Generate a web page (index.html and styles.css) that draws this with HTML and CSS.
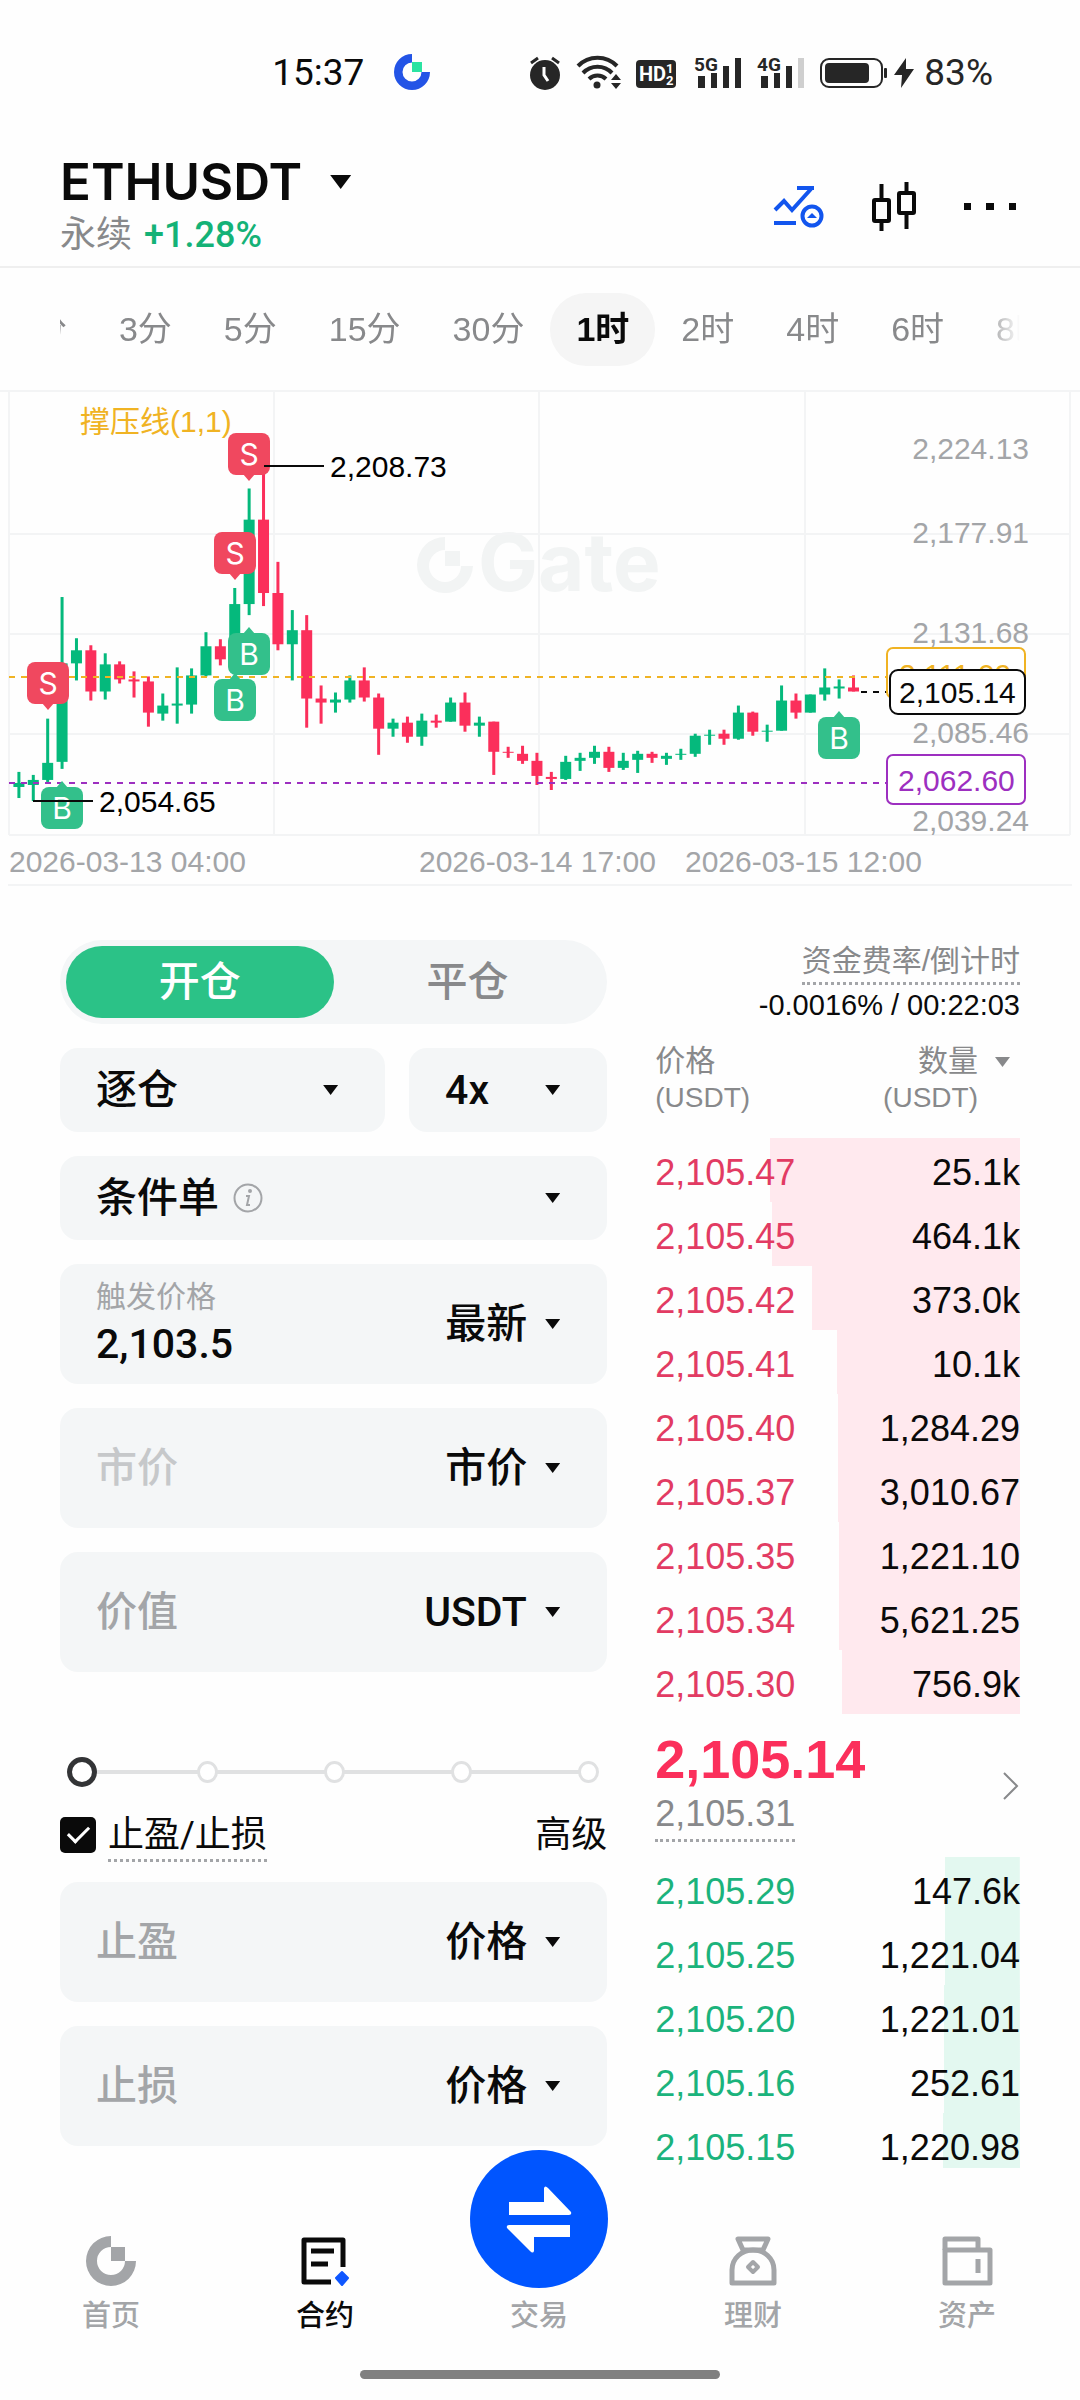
FILE: index.html
```
<!DOCTYPE html>
<html lang="zh-CN">
<head>
    <meta charset="UTF-8">
    <meta name="viewport" content="width=device-width, initial-scale=1">
    <title>ETHUSDT 永续</title>
    <link rel="stylesheet" href="styles.css">
</head>
<body>
    <div class="status-bar">
        <span class="clock">15:37</span>
        <svg class="app-logo" width="36" height="36" viewBox="0 0 36 36">
            <path d="M18 0A18 18 0 1 0 36 18H27.500A9.500 9.500 0 1 1 18 8.500Z" fill="#2354e6"/>
            <rect x="18" y="8" width="10" height="10" fill="#2be3a2"/>
        </svg>
        <svg class="status-icons" width="388" height="42" viewBox="0 0 388 42" fill="#262626">
            <!-- alarm -->
            <circle cx="17" cy="24" r="15"/>
            <path d="M3 12L10 7M31 12L24 7" stroke="#262626" stroke-width="3" fill="none"/>
            <path d="M16 16V24L20 30" stroke="#fff" stroke-width="3" fill="none"/>
            <!-- wifi -->
            <g fill="none" stroke="#262626" stroke-width="4">
                <path d="M50 15A27 27 0 0 1 89 15"/>
                <path d="M55 22A20 20 0 0 1 84 22"/>
                <path d="M61 28A12 12 0 0 1 78 28"/>
            </g>
            <circle cx="69" cy="34" r="3.500"/>
            <path d="M83 29L88 23L93 29ZM83 32H93L88 38Z"/>
            <!-- hd -->
            <rect x="108" y="9" width="40" height="28" rx="4"/>
            <text class="tiny" x="111" y="30" font-size="20" fill="#fff">HD</text>
            <text class="tiny" x="138" y="22" font-size="13" fill="#fff">1</text>
            <text class="tiny" x="138" y="34" font-size="13" fill="#fff">2</text>
            <!-- 5G -->
            <text class="tiny" x="166" y="20" font-size="19">5G</text>
            <path d="M170 25h7v12h-7zM183 22h6v15h-6zM195 15h6v22h-6zM207 7h6v30h-6z"/>
            <!-- 4G -->
            <text class="tiny" x="229" y="20" font-size="19">4G</text>
            <path d="M233 25h7v12h-7zM246 22h6v15h-6zM258 15h6v22h-6z"/>
            <path d="M270 7h6v30h-6z" fill="#cfcfcf"/>
            <!-- battery -->
            <rect x="293" y="8" width="61" height="28" rx="8" fill="none" stroke="#262626" stroke-width="2"/>
            <rect x="297" y="12" width="44" height="20" rx="4"/>
            <rect x="356" y="17" width="3" height="10" rx="1"/>
            <path d="M378 7L366 24H374L373 37L386 18H378Z"/>
        </svg>
        <span class="battery">83%</span>
    </div>

    <header class="header">
        <div>
            <button class="symbol">ETHUSDT <span class="caret"></span></button>
            <div class="change">永续 <b>+1.28%</b></div>
        </div>
        <div class="header-actions">
            <button aria-label="指标">
                <svg width="52" height="50" viewBox="0 0 52 50" fill="none" stroke="#1255ee" stroke-width="4">
                    <path d="M2 28L11 19L19 28L38 7M24 6H41"/>
                    <path d="M1 41H23"/>
                    <circle cx="39" cy="34" r="9.500"/>
                    <path d="M34 36L39 31L44 36Z" fill="#1255ee" stroke="none"/>
                </svg>
            </button>
            <button aria-label="K线">
                <svg width="46" height="50" viewBox="0 0 46 50" fill="none" stroke="#0a0a0a" stroke-width="4">
                    <rect x="3" y="18" width="15" height="21" rx="1"/>
                    <rect x="28" y="11" width="15" height="20" rx="1"/>
                    <path d="M10.500 2V18M10.500 39V49M35.500 0V11M35.500 31V47"/>
                </svg>
            </button>
            <button aria-label="更多">
                <svg width="54" height="50" viewBox="0 0 54 50" fill="#0a0a0a">
                    <path d="M1 21h7v7H1zM23 21h8v7h-8zM46 21h7v7h-7z"/>
                </svg>
            </button>
        </div>
    </header>

    <div class="periods">
        <div class="period-strip">
            <button>1分</button>
            <button>3分</button>
            <button>5分</button>
            <button>15分</button>
            <button>30分</button>
            <button class="active">1时</button>
            <button>2时</button>
            <button>4时</button>
            <button>6时</button>
            <button>8时</button>
        </div>
    </div>

    <svg class="chart" viewBox="0 0 1080 500">
        <g class="watermark">
            <path d="M445 147A28 28 0 1 0 473 176H461A16 16 0 1 1 445 160Z"/>
            <rect x="445" y="161" width="15" height="15"/>
            <text x="478" y="201">Gate</text>
        </g>
        <path class="grid" d="M0 1H1080M9 144H1070M9 244H1070M9 344H1070M9 445H1070M8 495H1072M9 1V445M274 1V445M539 1V445M805 1V445M1070 1V445"/>
        <g class="axis">
            <text x="1029" y="69">2,224.13</text>
            <text x="1029" y="153">2,177.91</text>
            <text x="1029" y="253">2,131.68</text>
            <text x="1029" y="353">2,085.46</text>
            <text x="1029" y="441">2,039.24</text>
        </g>
        <g class="dates">
            <text x="9" y="482">2026-03-13 04:00</text>
            <text x="419" y="482">2026-03-14 17:00</text>
            <text x="685" y="482">2026-03-15 12:00</text>
        </g>
        <text class="indicator" x="80" y="42">撑压线(1,1)</text>

        <g id="candles"></g>

        <path class="line-high" d="M9 287H887"/>
        <path class="line-low" d="M9 393H887"/>
        <path class="line-last" d="M861 302H890"/>

        <g id="markers"></g>

        <path class="callout" d="M264 76H324M33 411H93"/>
        <text x="330" y="87">2,208.73</text>
        <text x="99" y="422">2,054.65</text>

        <g class="tag tag-high">
            <rect x="887" y="258" width="138" height="50" rx="6"/>
            <text x="899" y="295">2,111.09</text>
        </g>
        <g class="tag tag-low">
            <rect x="887" y="365" width="138" height="49" rx="6"/>
            <text x="898" y="401">2,062.60</text>
        </g>
        <g class="tag tag-last">
            <rect x="890" y="280" width="135" height="44" rx="8"/>
            <text x="899" y="313">2,105.14</text>
        </g>
    </svg>

    <main class="trade">
        <form class="order">
            <div class="segmented">
                <button type="button" class="active">开仓</button>
                <button type="button">平仓</button>
            </div>

            <div class="pair">
                <label class="field">
                    <select aria-label="保证金模式"><option>逐仓</option></select>
                    <span class="caret"></span>
                </label>
                <label class="field">
                    <select aria-label="杠杆"><option>4x</option></select>
                    <span class="caret"></span>
                </label>
            </div>

            <label class="field">
                <select aria-label="委托类型"><option>条件单</option></select>
                <svg width="30" height="30" viewBox="0 0 30 30" fill="none" stroke="#a3a5a8" stroke-width="2">
                    <circle cx="15" cy="15" r="13.500"/>
                    <path d="M13 13H16L14 22H17"/>
                    <circle cx="17" cy="8" r="1" fill="#a3a5a8"/>
                </svg>
                <span class="caret"></span>
            </label>

            <div class="field tall">
                <label class="stacked">
                    <span>触发价格</span>
                    <input type="text" value="2,103.5">
                </label>
                <select aria-label="触发类型"><option>最新</option></select>
                <span class="caret"></span>
            </div>

            <div class="field tall">
                <input type="text" placeholder="市价" aria-label="价格" disabled>
                <select aria-label="价格类型"><option>市价</option></select>
                <span class="caret"></span>
            </div>

            <div class="field tall">
                <input type="text" placeholder="价值" aria-label="价值">
                <select aria-label="单位"><option>USDT</option></select>
                <span class="caret"></span>
            </div>

            <div class="slider">
                <div class="ticks"><i></i><i></i><i></i><i></i><i></i></div>
                <input type="range" min="0" max="100" value="0" aria-label="仓位比例">
            </div>

            <div class="tpsl">
                <input type="checkbox" id="tpsl" checked>
                <label for="tpsl">止盈/止损</label>
                <button type="button">高级</button>
            </div>

            <div class="field tall">
                <input type="text" placeholder="止盈" aria-label="止盈">
                <select aria-label="止盈类型"><option>价格</option></select>
                <span class="caret"></span>
            </div>

            <div class="field tall">
                <input type="text" placeholder="止损" aria-label="止损">
                <select aria-label="止损类型"><option>价格</option></select>
                <span class="caret"></span>
            </div>
        </form>

        <section class="book">
            <div class="funding">
                <span class="dotted">资金费率/倒计时</span>
                <div>-0.0016% / 00:22:03</div>
            </div>
            <table>
                <thead>
                    <tr>
                        <th>价格<br><small>(USDT)</small></th>
                        <th>
                            <div class="amount-head">
                                <button>数量<br><small>(USDT)</small></button>
                                <span class="caret"></span>
                            </div>
                        </th>
                    </tr>
                </thead>
                <tbody class="asks">
                    <tr style="--depth: 68.5%"><td>2,105.47</td><td>25.1k</td></tr>
                    <tr style="--depth: 68%"><td>2,105.45</td><td>464.1k</td></tr>
                    <tr style="--depth: 57%"><td>2,105.42</td><td>373.0k</td></tr>
                    <tr style="--depth: 50.2%"><td>2,105.41</td><td>10.1k</td></tr>
                    <tr style="--depth: 49.9%"><td>2,105.40</td><td>1,284.29</td></tr>
                    <tr style="--depth: 49.9%"><td>2,105.37</td><td>3,010.67</td></tr>
                    <tr style="--depth: 49.6%"><td>2,105.35</td><td>1,221.10</td></tr>
                    <tr style="--depth: 49.6%"><td>2,105.34</td><td>5,621.25</td></tr>
                    <tr style="--depth: 48.8%"><td>2,105.30</td><td>756.9k</td></tr>
                </tbody>
                <tbody class="last">
                    <tr>
                        <td colspan="2">
                            <div class="last-row">
                                <div>
                                    <strong>2,105.14</strong>
                                    <span class="dotted">2,105.31</span>
                                </div>
                                <svg width="18" height="30" viewBox="0 0 18 30" fill="none" stroke="#88898b" stroke-width="2">
                                    <path d="M2 2L15 15L2 28"/>
                                </svg>
                            </div>
                        </td>
                    </tr>
                </tbody>
                <tbody class="bids">
                    <tr style="--depth: 20.5%"><td>2,105.29</td><td>147.6k</td></tr>
                    <tr style="--depth: 20.5%"><td>2,105.25</td><td>1,221.04</td></tr>
                    <tr style="--depth: 20.8%"><td>2,105.20</td><td>1,221.01</td></tr>
                    <tr style="--depth: 20.8%"><td>2,105.16</td><td>252.61</td></tr>
                    <tr style="--depth: 21.1%"><td>2,105.15</td><td>1,220.98</td></tr>
                </tbody>
            </table>
        </section>
    </main>

    <nav class="tabbar">
        <a href="#home">
            <svg width="50" height="50" viewBox="0 0 50 50" fill="#a3a5a8">
                <path d="M25 0A25 25 0 1 0 50 25H39A14 14 0 1 1 25 11Z"/>
                <rect x="25" y="11" width="14" height="14"/>
            </svg>
            首页
        </a>
        <a href="#futures" class="active">
            <svg width="50" height="50" viewBox="0 0 50 50" fill="none" stroke="#0a0a0a" stroke-width="5">
                <path d="M31 46H4V4H43V31" stroke-linejoin="round"/>
                <path d="M11 15H34M11 28H28"/>
                <path d="M42 36L48 42L42 49L36 42Z" fill="#0f57ff" stroke="#0f57ff" stroke-width="2" stroke-linejoin="round"/>
            </svg>
            合约
        </a>
        <a href="#trade" class="swap">
            <svg width="138" height="138" viewBox="0 0 138 138">
                <circle cx="69" cy="69" r="69" fill="#0055ff"/>
                <path d="M39 52H74V38Q75 35 78 38L101 62Q102 65 99 65H39ZM100 75V87H64V101Q63 104 60 101L37 78Q36 75 39 75Z" fill="#fff"/>
            </svg>
            交易
        </a>
        <a href="#earn">
            <svg width="50" height="50" viewBox="0 0 50 50" fill="none" stroke="#a3a5a8" stroke-width="5" stroke-linejoin="round">
                <path d="M10 3H40L35 14H15Z"/>
                <path d="M4 47V34C4 22 14 14 25 14S46 22 46 34V47Z"/>
                <path d="M25 26L30 31L25 36L20 31Z" stroke-width="4"/>
            </svg>
            理财
        </a>
        <a href="#assets">
            <svg width="52" height="50" viewBox="0 0 52 50" fill="none" stroke="#a3a5a8" stroke-width="5" stroke-linejoin="round">
                <path d="M4 14V3H37V14"/>
                <rect x="4" y="14" width="45" height="33"/>
                <path d="M37 23V37"/>
            </svg>
            资产
        </a>
    </nav>
    <div class="home-indicator"></div>

    <script src="chart.js"></script>
</body>
</html>
```
FILE: styles.css
```
* {
    box-sizing: border-box;
}
body {
    margin: 0;
    background: #fefefe;
    color: #0a0a0a;
    font-family: "Liberation Sans", "Noto Sans CJK SC", sans-serif;
    font-size: 36px;
}
button, input, select {
    font: inherit;
    color: inherit;
    background: none;
    border: none;
    padding: 0;
    margin: 0;
}
select {
    appearance: none;
}
.caret {
    flex: none;
    width: 15px;
    height: 10px;
    background: currentColor;
    clip-path: polygon(0 0, 100% 0, 50% 100%);
}
.dotted {
    border-bottom: 3px dotted #a3a5a8;
}

/* status bar */
.status-bar {
    display: flex;
    align-items: center;
    justify-content: flex-end;
    height: 144px;
    padding-right: 87px;
    font-family: Roboto, sans-serif;
    font-size: 37px;
}
.app-logo {
    margin: 0 98px 0 30px;
}
.battery {
    margin-left: 8px;
    color: #262626;
}
.tiny {
    font-family: Roboto, sans-serif;
    font-weight: 700;
}

/* header */
.header {
    display: flex;
    justify-content: space-between;
    align-items: center;
    height: 124px;
    padding: 4px 63px 0 60px;
    border-bottom: 2px solid #efefef;
}
.symbol {
    display: flex;
    align-items: center;
    gap: 28px;
    font-family: Inter, sans-serif;
    font-size: 51px;
    font-weight: 600;
    line-height: 56px;
}
.symbol .caret {
    width: 21px;
    height: 14px;
}
.change {
    line-height: 50px;
    color: #88898b;
}
.change b {
    margin-left: 2px;
    font-family: Roboto, sans-serif;
    font-weight: 500;
    color: #14b277;
}
.header-actions {
    display: flex;
    gap: 46px;
}
.header-actions svg {
    display: block;
}

/* periods */
.periods {
    margin: 0 60px;
    padding: 25px 0 24px;
    overflow: hidden;
    mask-image: linear-gradient(to right, #000 96%, transparent);
}
.period-strip {
    display: flex;
    margin-left: -72px;
}
.period-strip button {
    flex: none;
    padding: 0 26px;
    border-radius: 36px;
    font-size: 34px;
    line-height: 73px;
    color: #88898b;
}
.period-strip .active {
    background: #f5f5f5;
    color: #0a0a0a;
    font-weight: 700;
}

/* chart */
.chart {
    display: block;
    width: 100%;
    font-size: 30px;
}
.watermark {
    fill: #f2f4f4;
    font-family: Inter, sans-serif;
    font-size: 80px;
    font-weight: 700;
}
.grid {
    stroke: #f3f4f5;
    stroke-width: 2;
}
.axis {
    fill: #a3a5a8;
    text-anchor: end;
}
.dates {
    fill: #a3a5a8;
}
.indicator {
    fill: #f0b323;
}
.up {
    fill: #05b97c;
}
.down {
    fill: #fb2f5b;
}
.line-high, .line-low, .line-last {
    stroke-width: 2;
    stroke-dasharray: 6 6;
}
.line-high {
    stroke: #f0b323;
}
.line-low {
    stroke: #9d2fc0;
}
.line-last, .callout {
    stroke: #0a0a0a;
    stroke-width: 2;
}
.marker {
    font-family: Inter, sans-serif;
    font-size: 30px;
    text-anchor: middle;
}
.marker text {
    fill: #fff;
}
.marker.sell {
    fill: #f0485f;
}
.marker.buy {
    fill: #33c08b;
}
.tag rect {
    fill: #fff;
    stroke: currentColor;
    stroke-width: 2;
}
.tag text {
    fill: currentColor;
}
.tag-high {
    color: #f0b323;
}
.tag-low {
    color: #9d2fc0;
}

/* trade area */
.trade {
    display: grid;
    grid-template-columns: 3fr 2fr;
    gap: 48px;
    padding: 50px 60px 0;
}
.order {
    display: flex;
    flex-direction: column;
    gap: 24px;
    min-width: 0;
    font-family: Roboto, "Noto Sans CJK SC", sans-serif;
    font-size: 41px;
    font-weight: 500;
}
.segmented {
    display: flex;
    padding: 6px;
    border-radius: 42px;
    background: #f4f6f7;
}
.segmented button {
    flex: 1;
    border-radius: 36px;
    line-height: 72px;
    color: #88898b;
}
.segmented .active {
    background: #2bc287;
    color: #fff;
}
.pair {
    display: grid;
    grid-template-columns: 325fr 198fr;
    gap: 24px;
}
.field {
    display: flex;
    align-items: center;
    height: 84px;
    padding: 0 47px 0 36px;
    border-radius: 18px;
    background: #f4f6f7;
}
.field.tall {
    height: 120px;
}
.field > svg {
    margin-left: 14px;
}
.field .caret {
    margin-left: auto;
}
.field.tall .caret {
    margin-left: 18px;
}
.field input {
    flex: 1;
    width: 100%;
    min-width: 0;
}
.field input::placeholder {
    color: #a3a5a8;
}
.field input:disabled::placeholder {
    color: #c6c8ca;
}
.stacked {
    flex: 1;
    min-width: 0;
}
.stacked span {
    display: block;
    font-size: 30px;
    font-weight: 400;
    line-height: 40px;
    color: #a3a5a8;
}
.stacked input {
    display: block;
    height: 54px;
}

/* amount slider */
.slider {
    position: relative;
    margin: 54px 0 -6px;
    padding: 0 7px;
}
.slider input {
    position: relative;
    display: block;
    width: 100%;
    height: 44px;
    appearance: none;
}
.slider input::-webkit-slider-thumb {
    appearance: none;
    width: 30px;
    height: 30px;
    border: 5px solid #333436;
    border-radius: 50%;
    background: #fff;
}
.ticks {
    position: absolute;
    inset: 11px 8px 11px 10px;
    display: flex;
    justify-content: space-between;
    background: linear-gradient(#e0e1e2, #e0e1e2) center / 96% 4px no-repeat;
}
.ticks i {
    width: 21px;
    height: 22px;
    border: 3px solid #e0e1e2;
    border-radius: 50%;
    background: #fff;
}

.tpsl {
    display: flex;
    align-items: center;
    height: 46px;
    font-size: 36px;
    font-weight: 400;
}
.tpsl input {
    appearance: none;
    width: 36px;
    height: 36px;
    margin-right: 12px;
    border-radius: 5px;
    background: #0a0a0a;
    display: grid;
    place-items: center;
}
.tpsl input:checked::before {
    content: "";
    width: 18px;
    height: 9px;
    margin-bottom: 6px;
    border-left: 3px solid #fff;
    border-bottom: 3px solid #fff;
    transform: rotate(-45deg);
}
.tpsl label {
    padding-top: 3px;
    line-height: 48px;
    border-bottom: 3px dotted #a3a5a8;
}
.tpsl button {
    margin-left: auto;
    line-height: 48px;
}

/* order book */
.funding {
    text-align: right;
    font-size: 30px;
    line-height: 42px;
    color: #88898b;
}
.funding .dotted {
    display: inline-block;
}
.funding div {
    font-size: 29px;
    line-height: 40px;
    color: #0a0a0a;
}
table {
    width: 100%;
    border-collapse: collapse;
    font-size: 36px;
}
th {
    height: 113px;
    padding: 18px 0 0;
    text-align: left;
    vertical-align: top;
    font-size: 30px;
    font-weight: 400;
    line-height: 36px;
    color: #88898b;
}
.amount-head {
    display: flex;
    justify-content: flex-end;
    gap: 17px;
    padding-right: 10px;
}
.amount-head button {
    text-align: right;
}
.amount-head .caret {
    margin-top: 14px;
}
small {
    font-size: 28px;
}
td {
    height: 64px;
    padding: 5px 0 0;
    line-height: 48px;
}
td + td {
    text-align: right;
}
.asks tr {
    background: linear-gradient(#ffe9ee, #ffe9ee) right / var(--depth) 100% no-repeat;
}
.bids tr {
    background: linear-gradient(#e3f8f0, #e3f8f0) right / var(--depth) 100% no-repeat;
}
.asks td:first-child {
    color: #e23b63;
}
.bids td:first-child {
    color: #1bb37c;
}
.last td {
    height: 143px;
    padding: 0;
}
.last-row {
    display: flex;
    justify-content: space-between;
    align-items: center;
    color: #88898b;
}
.last-row strong {
    display: block;
    font-size: 54px;
    line-height: 60px;
    color: #fb2f5b;
}
.last-row .dotted {
    display: inline-block;
    line-height: 50px;
}

/* bottom tabs */
.tabbar {
    position: relative;
    display: grid;
    grid-template-columns: repeat(5, 1fr);
    align-items: end;
    height: 168px;
    margin-top: -9px;
    padding: 0 6px 0 4px;
    background: #fefefe;
}
.tabbar a {
    display: flex;
    flex-direction: column;
    align-items: center;
    gap: 10px;
    font-size: 29px;
    font-weight: 500;
    line-height: 40px;
    color: #a3a5a8;
    text-decoration: none;
}
.tabbar .active {
    color: #0a0a0a;
}
.tabbar .swap {
    gap: 8px;
    margin-top: -18px;
}
.home-indicator {
    width: 360px;
    height: 9px;
    margin: 34px auto 0;
    border-radius: 5px;
    background: #808080;
}
```
FILE: chart.js
```
// [direction, high, body top, body bottom, low] in chart units
const candles = [
    ['up', 380, 391, 395, 406], ['up', 383, 388, 393, 409], ['up', 327, 371, 388, 390],
    ['up', 206, 272, 370, 377], ['up', 247, 259, 272, 289], ['down', 254, 259, 300, 309],
    ['up', 262, 273, 300, 308], ['down', 270, 273, 288, 292], ['down', 280, 288, 290, 306],
    ['down', 285, 290, 321, 335], ['up', 302, 314, 322, 329], ['up', 276, 312, 314, 332],
    ['up', 277, 284, 313, 322], ['up', 241, 255, 284, 285], ['down', 248, 255, 268, 274],
    ['up', 197, 213, 275, 275], ['up', 98, 129, 213, 224], ['down', 76, 129, 202, 215],
    ['down', 171, 202, 253, 259], ['up', 219, 239, 253, 289], ['down', 224, 239, 307, 336],
    ['down', 294, 307, 311, 332], ['up', 301, 308, 311, 321], ['up', 284, 289, 308, 311],
    ['down', 276, 289, 306, 310], ['down', 302, 306, 337, 363], ['up', 327, 331, 337, 345],
    ['down', 325, 331, 345, 351], ['up', 322, 329, 345, 354], ['down', 323, 329, 331, 336],
    ['up', 306, 311, 330, 330], ['down', 301, 311, 334, 340], ['up', 325, 331, 334, 345],
    ['down', 330, 330, 360, 383], ['down', 355, 360, 361, 366], ['down', 354, 362, 369, 372],
    ['down', 361, 369, 384, 393], ['down', 380, 385, 387, 398], ['up', 364, 370, 387, 388],
    ['up', 361, 366, 369, 379], ['up', 354, 360, 366, 372], ['down', 355, 360, 376, 380],
    ['up', 361, 369, 376, 378], ['up', 359, 362, 368, 381], ['down', 360, 362, 366, 371],
    ['up', 361, 364, 367, 373], ['up', 357, 362, 363, 368], ['up', 342, 344, 362, 365],
    ['up', 338, 343, 344, 353], ['down', 338, 342, 347, 353], ['up', 314, 321, 347, 348],
    ['down', 320, 321, 340, 344], ['up', 333, 339, 340, 350], ['up', 294, 309, 339, 339],
    ['down', 302, 309, 321, 327], ['up', 303, 303, 321, 321], ['up', 277, 296, 303, 309],
    ['up', 288, 295, 297, 307], ['down', 284, 296, 300, 300]
];

// [side, center x, box top]
const markers = [
    ['S', 249, 43], ['S', 235, 142], ['S', 48, 272],
    ['B', 235, 289], ['B', 249, 243], ['B', 62, 397], ['B', 839, 327]
];

const first = 18.9;
const step = 14.39;
const toY = (v) => v * 1.005;

document.getElementById('candles').innerHTML = candles.map(([dir, high, top, bottom, low], i) => {
    const x = first + i * step;
    return `<g class="${dir}">
        <rect x="${x - 1.5}" y="${toY(high)}" width="3" height="${toY(low - high)}"/>
        <rect x="${x - 5.5}" y="${toY(top)}" width="11" height="${toY(bottom - top)}"/>
    </g>`;
}).join('');

document.getElementById('markers').innerHTML = markers.map(([side, x, y]) => {
    const tip = side === 'S'
        ? `M${x - 6} ${y + 41}h12l-6 7z`
        : `M${x - 6} ${y + 1}h12l-6 -7z`;
    return `<g class="marker ${side === 'S' ? 'sell' : 'buy'}">
        <rect x="${x - 21}" y="${y}" width="42" height="42" rx="8"/>
        <path d="${tip}"/>
        <text x="${x}" y="${y + 32}">${side}</text>
    </g>`;
}).join('');
```
